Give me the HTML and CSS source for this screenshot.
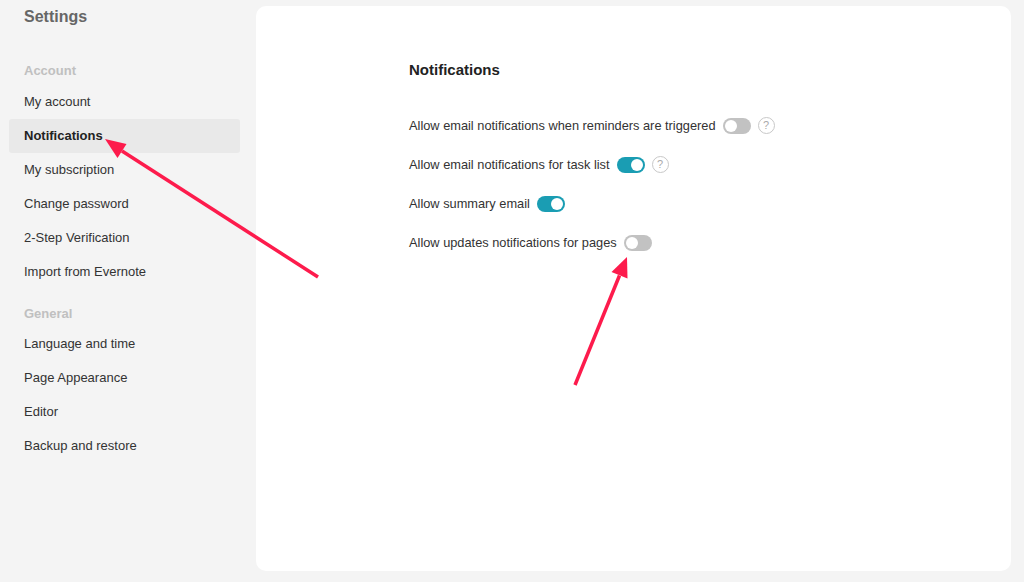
FILE: index.html
```html
<!DOCTYPE html>
<html lang="en">
	<head>
		<meta charset="UTF-8">
		<meta name="viewport" content="width=device-width, initial-scale=1.0">
		<title>Settings</title>
		<link rel="stylesheet" href="styles.css">
	</head>

	<body>
		<div class="sidebar">
			<div class="sidebar-title">Settings</div>

			<div class="nav-label">Account</div>
			<div class="nav-item">My account</div>
			<div class="nav-item active">Notifications</div>
			<div class="nav-item">My subscription</div>
			<div class="nav-item">Change password</div>
			<div class="nav-item">2-Step Verification</div>
			<div class="nav-item">Import from Evernote</div>

			<div class="nav-label general">General</div>
			<div class="nav-item">Language and time</div>
			<div class="nav-item">Page Appearance</div>
			<div class="nav-item">Editor</div>
			<div class="nav-item">Backup and restore</div>
		</div>

		<div class="panel">
			<h2>Notifications</h2>

			<div class="setting-row">
				<span>Allow email notifications when reminders are triggered</span>
				<span class="toggle"></span>
				<span class="help">?</span>
			</div>
			<div class="setting-row">
				<span>Allow email notifications for task list</span>
				<span class="toggle on"></span>
				<span class="help">?</span>
			</div>
			<div class="setting-row">
				<span>Allow summary email</span>
				<span class="toggle on"></span>
			</div>
			<div class="setting-row">
				<span>Allow updates notifications for pages</span>
				<span class="toggle"></span>
			</div>
		</div>

		<!-- annotation arrows drawn over the screenshot -->
		<svg class="arrows" width="1024" height="582" viewBox="0 0 1024 582">
			<line x1="318" y1="277" x2="122" y2="151" />
			<polygon points="105,139 126.5,144 117.5,158" />
			<line x1="575" y1="385" x2="619.5" y2="275.5" />
			<polygon points="627,257 627.5,278.5 611.5,272" />
		</svg>
	</body>
</html>
```

FILE: styles.css
```css
html, body {
	margin: 0;
	height: 100%;
}

body {
	font-family: "Liberation Sans", Arial, sans-serif;
	font-size: 13px;
	color: #333;
	background-color: #f4f4f4;
	display: flex;
	position: relative;
	overflow: hidden;
}

.sidebar {
	width: 256px;
	flex-shrink: 0;
	padding-top: 7px;
	display: flex;
	flex-direction: column;
}

.sidebar-title {
	font-size: 16px;
	font-weight: bold;
	line-height: 20px;
	color: #666;
	padding-left: 24px;
	margin-bottom: 34px;
}

.nav-label {
	font-size: 13px;
	font-weight: bold;
	line-height: 20px;
	color: #c0c0c0;
	padding-left: 24px;
	margin-bottom: 4px;
}

.nav-label.general {
	margin-top: 15px;
	margin-bottom: 3px;
}

.nav-item {
	height: 34px;
	line-height: 34px;
	margin-left: 9px;
	width: 231px;
	padding-left: 15px;
	box-sizing: border-box;
	border-radius: 3px;
}

.nav-item.active {
	background-color: #e9e9e9;
	font-weight: bold;
	color: #222;
}

.panel {
	flex: 1;
	background-color: #fff;
	margin: 6px 13px 11px 0;
	border-radius: 10px;
	padding: 54px 0 0 153px;
}

.panel h2 {
	margin: 0 0 26px 0;
	font-size: 15px;
	line-height: 20px;
	color: #222;
}

.setting-row {
	height: 39px;
	display: flex;
	align-items: center;
	gap: 7px;
	font-size: 12.8px;
}

.toggle {
	width: 28px;
	height: 16px;
	border-radius: 8px;
	background-color: #c2c2c2;
	position: relative;
}

.toggle::after {
	content: "";
	position: absolute;
	top: 2px;
	left: 2px;
	width: 12px;
	height: 12px;
	border-radius: 50%;
	background-color: #fff;
}

.toggle.on {
	background-color: #1a9db3;
}

.toggle.on::after {
	left: 14px;
}

.help {
	width: 15px;
	height: 15px;
	border: 1px solid #c8c8c8;
	border-radius: 50%;
	font-size: 11px;
	line-height: 15px;
	text-align: center;
	color: #aaa;
}

.arrows {
	position: absolute;
	top: 0;
	left: 0;
	pointer-events: none;
}

.arrows line {
	stroke: #fd1b4c;
	stroke-width: 3.5;
}

.arrows polygon {
	fill: #fd1b4c;
}
```
